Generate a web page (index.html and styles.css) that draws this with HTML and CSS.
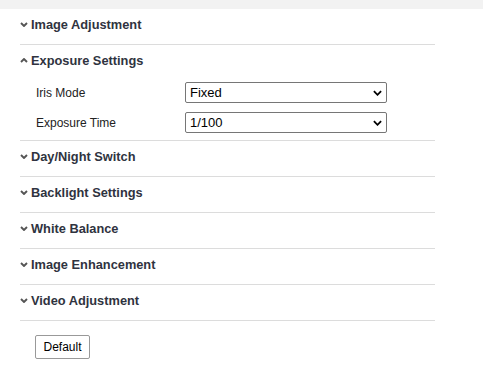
FILE: index.html
```html
<!DOCTYPE html>
<html lang="en">
<head>
<meta charset="utf-8">
<title>Image Settings</title>
<link rel="stylesheet" href="styles.css">
</head>
<body>
<div class="topbar"></div>
<div class="panel">
  <div class="section">
    <div class="head"><svg class="chev" viewBox="0 0 8 5"><path d="M1 1 L4 4 L7 1"/></svg><span>Image Adjustment</span></div>
  </div>
  <div class="section open">
    <div class="head"><svg class="chev" viewBox="0 0 8 5"><path d="M1 4 L4 1 L7 4"/></svg><span>Exposure Settings</span></div>
    <div class="body">
      <div class="row">
        <label class="lbl">Iris Mode</label>
        <div class="selwrap">
          <select class="sel"><option>Fixed</option></select>
          <svg class="arrow" viewBox="0 0 10 6"><path d="M1 1 L5 5 L9 1"/></svg>
        </div>
      </div>
      <div class="row">
        <label class="lbl">Exposure Time</label>
        <div class="selwrap">
          <select class="sel"><option>1/100</option></select>
          <svg class="arrow" viewBox="0 0 10 6"><path d="M1 1 L5 5 L9 1"/></svg>
        </div>
      </div>
    </div>
  </div>
  <div class="section">
    <div class="head"><svg class="chev" viewBox="0 0 8 5"><path d="M1 1 L4 4 L7 1"/></svg><span>Day/Night Switch</span></div>
  </div>
  <div class="section">
    <div class="head"><svg class="chev" viewBox="0 0 8 5"><path d="M1 1 L4 4 L7 1"/></svg><span>Backlight Settings</span></div>
  </div>
  <div class="section">
    <div class="head"><svg class="chev" viewBox="0 0 8 5"><path d="M1 1 L4 4 L7 1"/></svg><span>White Balance</span></div>
  </div>
  <div class="section">
    <div class="head"><svg class="chev" viewBox="0 0 8 5"><path d="M1 1 L4 4 L7 1"/></svg><span>Image Enhancement</span></div>
  </div>
  <div class="section">
    <div class="head"><svg class="chev" viewBox="0 0 8 5"><path d="M1 1 L4 4 L7 1"/></svg><span>Video Adjustment</span></div>
  </div>
  <div class="actions">
    <button class="btn">Default</button>
  </div>
</div>
</body>
</html>
```

FILE: styles.css
```css
html, body {
  margin: 0;
  padding: 0;
  background: #fff;
  font-family: "Liberation Sans", Arial, sans-serif;
  color: #333;
}
.topbar {
  height: 9px;
  background: #f2f2f2;
}
.panel {
  width: 415px;
  margin-left: 20px;
}
.section {
  border-bottom: 1px solid #dcdcdc;
}
.head {
  display: flex;
  align-items: center;
  height: 35px;
  box-sizing: border-box;
  padding-bottom: 5px;
  font-size: 12.8px;
  font-weight: bold;
  color: #2f3340;
}
.chev {
  width: 8px;
  height: 5px;
  margin: 0 3px 0 0;
  fill: none;
  stroke: #555;
  stroke-width: 1.9;
}
.body {
  display: flex;
  flex-direction: column;
  gap: 9px;
  padding: 2px 0 7px 0;
}
.row {
  display: grid;
  grid-template-columns: 165px 202px;
  align-items: center;
}
.lbl {
  padding-left: 16px;
  font-size: 12px;
  color: #222;
}
.selwrap {
  position: relative;
  height: 21px;
}
.sel {
  appearance: none;
  -webkit-appearance: none;
  width: 202px;
  height: 21px;
  box-sizing: border-box;
  margin: 0;
  padding: 0 0 0 4px;
  border: 1px solid #767676;
  border-radius: 2px;
  background: #fff;
  font-family: "Liberation Sans", Arial, sans-serif;
  font-size: 13px;
  color: #000;
}
.arrow {
  position: absolute;
  right: 5px;
  top: 8px;
  width: 9px;
  height: 6px;
  fill: none;
  stroke: #000;
  stroke-width: 2;
  pointer-events: none;
}
.actions {
  padding: 14px 0 0 15px;
}
.btn {
  width: 55px;
  height: 24px;
  box-sizing: border-box;
  margin: 0;
  padding: 0;
  border: 1px solid #999;
  border-radius: 2px;
  background: #fff;
  font-family: "Liberation Sans", Arial, sans-serif;
  font-size: 12px;
  color: #000;
}
```
